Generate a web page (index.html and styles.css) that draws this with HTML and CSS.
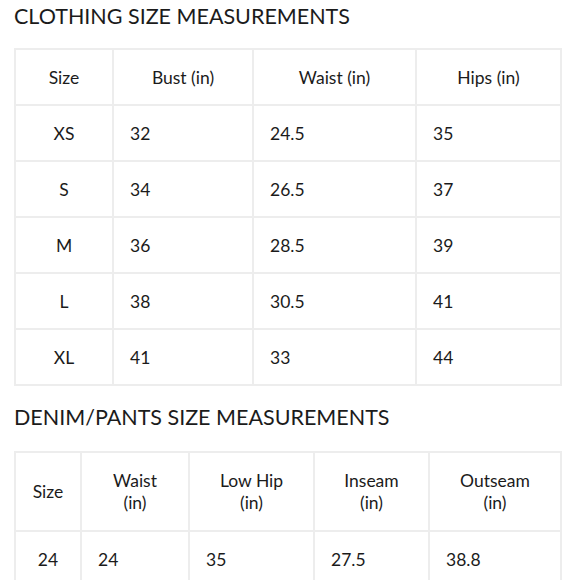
FILE: index.html
```html
<!DOCTYPE html>
<html>
<head>
<meta charset="utf-8">
<link rel="stylesheet" href="styles.css">
</head>
<body>
<h2 class="title">CLOTHING SIZE MEASUREMENTS</h2>
<table class="chart chart-clothing">
  <colgroup>
    <col class="c1"><col class="c2"><col class="c3"><col class="c4">
  </colgroup>
  <thead>
    <tr><th>Size</th><th>Bust (in)</th><th>Waist (in)</th><th>Hips (in)</th></tr>
  </thead>
  <tbody>
    <tr><td class="size">XS</td><td>32</td><td>24.5</td><td>35</td></tr>
    <tr><td class="size">S</td><td>34</td><td>26.5</td><td>37</td></tr>
    <tr><td class="size">M</td><td>36</td><td>28.5</td><td>39</td></tr>
    <tr><td class="size">L</td><td>38</td><td>30.5</td><td>41</td></tr>
    <tr><td class="size">XL</td><td>41</td><td>33</td><td>44</td></tr>
  </tbody>
</table>
<h2 class="title title-second">DENIM/PANTS SIZE MEASUREMENTS</h2>
<table class="chart chart-denim">
  <colgroup>
    <col class="d1"><col class="d2"><col class="d3"><col class="d4"><col class="d5">
  </colgroup>
  <thead>
    <tr><th>Size</th><th>Waist<br>(in)</th><th>Low Hip<br>(in)</th><th>Inseam<br>(in)</th><th>Outseam<br>(in)</th></tr>
  </thead>
  <tbody>
    <tr><td class="size">24</td><td>24</td><td>35</td><td>27.5</td><td>38.8</td></tr>
  </tbody>
</table>
</body>
</html>
```
FILE: styles.css
```css
html, body {
  margin: 0;
  padding: 0;
  background: #ffffff;
}
body {
  padding: 0 20px 0 14px;
  font-family: "Lato", "Liberation Sans", sans-serif;
  color: #1b1b1b;
  overflow: hidden;
}
.title {
  margin: 0;
  padding-top: 4px;
  height: 44px;
  font-size: 21.5px;
  font-weight: 400;
  line-height: 24px;
}
.title-second {
  margin-top: 15px;
  height: 46px;
}
.chart {
  border-collapse: collapse;
  width: 546px;
  table-layout: fixed;
  font-size: 17.5px;
}
.chart th, .chart td {
  border: 2px solid #ededed;
  font-weight: 400;
  vertical-align: middle;
  padding: 0 0 0 16px;
  text-align: left;
}
.chart th {
  text-align: center;
  padding: 0;
}
.chart td.size {
  text-align: center;
  padding: 0;
}
.chart-clothing th, .chart-clothing td {
  height: 54px;
}
.chart-denim th {
  height: 77px;
  line-height: 22px;
}
.chart-denim td {
  height: 54px;
}
.c1 { width: 98px; }
.c2 { width: 140px; }
.c3 { width: 163px; }
.c4 { width: 145px; }
.d1 { width: 66px; }
.d2 { width: 108px; }
.d3 { width: 125px; }
.d4 { width: 115px; }
.d5 { width: 132px; }
```
